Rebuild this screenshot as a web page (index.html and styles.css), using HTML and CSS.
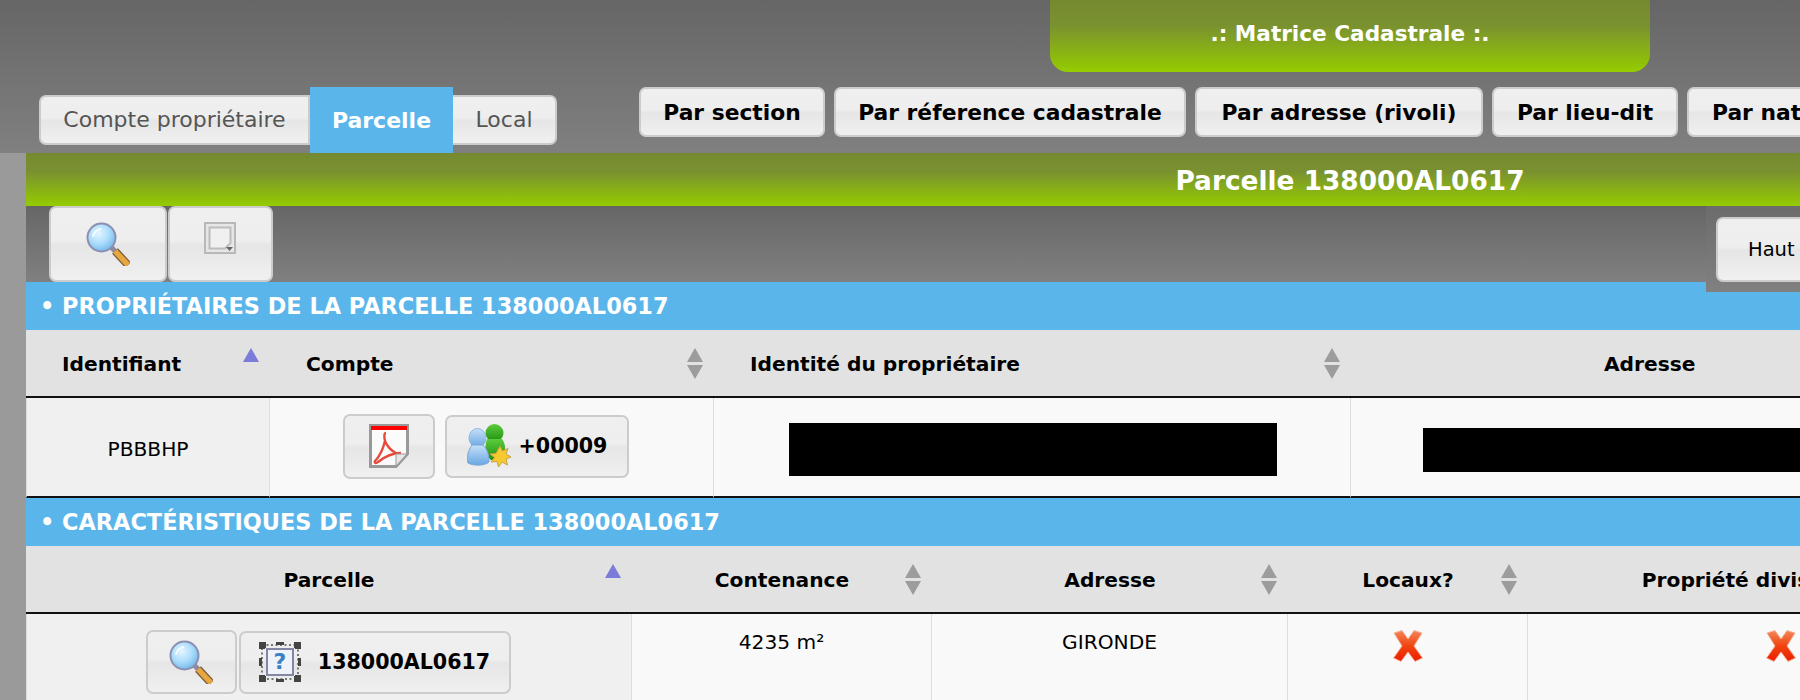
FILE: index.html
```html
<!DOCTYPE html>
<html lang="fr">
<head>
<meta charset="utf-8">
<title>Matrice Cadastrale</title>
<link rel="stylesheet" href="styles.css">
</head>
<body>
<svg class="defs" width="0" height="0" aria-hidden="true">
  <defs>
    <radialGradient id="lens" cx="0.4" cy="0.35" r="0.7">
      <stop offset="0" stop-color="#e4f6ff"/><stop offset="0.55" stop-color="#a9dcfb"/><stop offset="1" stop-color="#6fb4ea"/>
    </radialGradient>
    <linearGradient id="xred" x1="0" y1="0" x2="0" y2="1">
      <stop offset="0" stop-color="#f4875a"/><stop offset="0.5" stop-color="#f0440f"/><stop offset="1" stop-color="#ee1c00"/>
    </linearGradient>
    <linearGradient id="pblue" x1="0" y1="0" x2="0" y2="1">
      <stop offset="0" stop-color="#c4e0f9"/><stop offset="1" stop-color="#6aa6e2"/>
    </linearGradient>
    <linearGradient id="pgreen" x1="0" y1="0" x2="0" y2="1">
      <stop offset="0" stop-color="#5ccc3c"/><stop offset="1" stop-color="#1f8e12"/>
    </linearGradient>
    <symbol id="i-lens" viewBox="0 0 44 44">
      <path d="M25 25 L30 30" stroke="#8a8aa0" stroke-width="5"/>
      <path d="M29 29 L42 43" stroke="#7a5a3a" stroke-width="8"/>
      <path d="M29 29 L42 43" stroke="#e6a640" stroke-width="5.5"/>
      <circle cx="15.5" cy="15.5" r="14" fill="url(#lens)" stroke="#8c8fb0" stroke-width="2"/>
      <path d="M7 15 A9 9 0 0 1 15 7" fill="none" stroke="#f4fcff" stroke-width="2"/>
    </symbol>
    <symbol id="i-x" viewBox="0 0 32 32">
      <path d="M2 3 L10 0.5 L16 9 L22 0.5 L30 3 L22 16 L30.5 28 L23 31.5 L16 22 L9 31.5 L1.5 28 L10 16 Z" fill="url(#xred)" stroke="#f5b49a" stroke-width="1" stroke-linejoin="round"/>
    </symbol>
    <symbol id="s-up" viewBox="0 0 16 32"><path d="M8 1 L16 15 H0 Z" fill="#7b7bd8"/></symbol>
    <symbol id="s-both" viewBox="0 0 16 32"><path d="M8 1 L16 15 H0 Z M0 18 H16 L8 32 Z" fill="#9c9c9c"/></symbol>
  </defs>
</svg>
<div class="page">
  <header class="top">
    <div class="app-title">.: Matrice Cadastrale :.</div>
    <div class="top-row">
      <nav class="tabs">
        <a class="tab tab-first">Compte propriétaire</a>
        <a class="tab tab-active">Parcelle</a>
        <a class="tab tab-last">Local</a>
      </nav>
      <nav class="search-nav">
        <a class="btn nav-btn nav-short">Par section</a>
        <a class="btn nav-btn nav-ref">Par réference cadastrale</a>
        <a class="btn nav-btn nav-addr">Par adresse (rivoli)</a>
        <a class="btn nav-btn nav-short">Par lieu-dit</a>
        <a class="btn nav-btn">Par nature</a>
      </nav>
    </div>
  </header>
  <div class="main">
    <aside class="strip"></aside>
    <main class="content">
      <h1 class="page-title">Parcelle 138000AL0617</h1>
      <div class="toolbar">
        <a class="btn tool-btn tool-search"><svg class="ic44"><use href="#i-lens"/></svg></a>
        <a class="btn tool-btn tool-select">
          <svg class="ic32" viewBox="0 0 32 32">
            <rect x="1" y="1" width="30" height="30" fill="#e6e6e6" stroke="#b8b8b8" stroke-width="2"/>
            <path d="M5.5 5.5 H26.5 V21 L21 26.5 H5.5 Z" fill="#f0f0f0" stroke="#bcbcbc" stroke-width="2"/>
            <path d="M22 25 H29 L25.5 29 Z" fill="#666"/>
          </svg>
        </a>
        <div class="haut-box"><a class="btn haut-btn">Haut de page</a></div>
      </div>

      <h2 class="section-title">• PROPRIÉTAIRES DE LA PARCELLE 138000AL0617</h2>
      <table class="grid grid-owners">
        <colgroup><col class="o1"><col class="o2"><col class="o3"><col class="o4"></colgroup>
        <thead>
          <tr>
            <th class="left">Identifiant<svg class="sort"><use href="#s-up"/></svg></th>
            <th class="left">Compte<svg class="sort"><use href="#s-both"/></svg></th>
            <th class="left">Identité du propriétaire<svg class="sort"><use href="#s-both"/></svg></th>
            <th>Adresse</th>
          </tr>
        </thead>
        <tbody>
          <tr>
            <td class="sorted shift">PBBBHP</td>
            <td>
              <div class="cell-btns cell-btns-owner">
                <a class="btn row-btn pdf-btn">
                  <svg class="ic-pdf" viewBox="0 0 40 44">
                    <path d="M1.5 1.5 H38.5 V30 L27 42.5 H1.5 Z" fill="#fbfbfb" stroke="#999" stroke-width="3"/>
                    <rect x="2" y="2" width="36" height="4" fill="#f00"/>
                    <path d="M17 9 C15 9 15 13 16 17 C14 25 10 33 6 37 C5 39 7 40 9 38 C14 34 22 29 32 29 M16 17 C18 22 21 26 27 29" fill="none" stroke="#e64a3a" stroke-width="2.4"/>
                    <path d="M27 42 V30 H38 Z" fill="#e6e6e6" stroke="#999"/>
                  </svg>
                </a>
                <a class="btn row-btn count-btn">
                  <svg class="ic-users" viewBox="0 0 44 44">
                    <ellipse cx="27.5" cy="9" rx="9" ry="9" fill="url(#pgreen)"/>
                    <path d="M20 15 C17 24 18 31 24 36 H36 C39 28 39 20 35 15 Z" fill="url(#pgreen)"/>
                    <ellipse cx="10.5" cy="14" rx="8.5" ry="9.5" fill="url(#pblue)" stroke="#8fb6e0"/>
                    <path d="M5 21 C0 28 -1 37 1 39 C6 42 18 42 22 38 C22 30 20 25 16 21 Z" fill="url(#pblue)" stroke="#7ba7d8"/>
                    <path d="M33 22 L35.5 27 L41 24.5 L39 30 L44 33 L39 35 L40.5 41 L35 38 L31.5 43 L30 37.5 L24 38 L27.5 33.5 L23 30 L29 29.5 Z" fill="#f6c92e" stroke="#c9a24a"/>
                  </svg>
                  <span>+00009</span>
                </a>
              </div>
            </td>
            <td class="shift-more"><div class="redact redact-name"></div></td>
            <td class="shift-more"><div class="redact redact-addr"></div></td>
          </tr>
        </tbody>
      </table>

      <h2 class="section-title">• CARACTÉRISTIQUES DE LA PARCELLE 138000AL0617</h2>
      <table class="grid grid-carac">
        <colgroup><col class="c1"><col class="c2"><col class="c3"><col class="c4"><col class="c5"></colgroup>
        <thead>
          <tr>
            <th>Parcelle<svg class="sort"><use href="#s-up"/></svg></th>
            <th>Contenance<svg class="sort"><use href="#s-both"/></svg></th>
            <th>Adresse<svg class="sort"><use href="#s-both"/></svg></th>
            <th>Locaux?<svg class="sort"><use href="#s-both"/></svg></th>
            <th>Propriété divisée en lots</th>
          </tr>
        </thead>
        <tbody>
          <tr>
            <td class="sorted">
              <div class="cell-btns cell-btns-tight">
                <a class="btn row-btn lens-btn"><svg class="ic44"><use href="#i-lens"/></svg></a>
                <a class="btn row-btn parcel-btn">
                  <svg class="ic-parcel" viewBox="0 0 42 40">
                    <rect x="3" y="3" width="36" height="34" fill="none" stroke="#777" stroke-width="2" stroke-dasharray="2 2.5"/>
                    <path d="M0 0 H7 V6 H6 V7 H0 Z M35 0 H42 V7 H36 V6 H35 Z M0 33 H6 V34 H7 V40 H0 Z M42 33 V40 H35 V34 H36 V33 Z M17 0 H25 V3 H17 Z M17 37 H25 V40 H17 Z M0 16 H3 V24 H0 Z M39 16 H42 V24 H39 Z" fill="#444"/>
                    <rect x="8" y="7" width="26" height="26" fill="#eef3fa" stroke="#8585a5" stroke-width="2"/>
                    <text x="21" y="27" class="q-mark">?</text>
                  </svg>
                  <span>138000AL0617</span>
                </a>
              </div>
            </td>
            <td class="center pad-top">4235 m²</td>
            <td class="center pad-top">GIRONDE</td>
            <td class="center pad-icon"><svg class="ic32x"><use href="#i-x"/></svg></td>
            <td class="center pad-icon"><svg class="ic32x"><use href="#i-x"/></svg></td>
          </tr>
        </tbody>
      </table>
    </main>
  </div>
</div>
</body>
</html>
```
FILE: styles.css
```css
* { box-sizing: border-box; }
html, body { margin: 0; height: 700px; overflow: hidden; background: #808080; }
body { font-family: "DejaVu Sans", Verdana, sans-serif; color: #000; }
.defs { position: absolute; }
.page { width: 2700px; }
a { color: inherit; text-decoration: none; }

.top { height: 153px; background: linear-gradient(#666666, #808080); }
.app-title {
  width: 600px; height: 72px; margin: 0 auto;
  border-radius: 0 0 18px 18px;
  background: linear-gradient(#758a30 0, #7a9130 35%, #95cc00 100%);
  color: #fff; font-weight: bold; font-size: 21.6px; line-height: 67px; text-align: center;
}
.top-row { display: flex; align-items: flex-end; height: 66px; margin-top: 15px; padding-left: 39px; }
.tabs { display: flex; align-items: flex-end; width: 518px; flex: none; }
.tab {
  height: 50px; margin-bottom: 8px; border: 2px solid #cccccc; line-height: 46px;
  font-size: 22px; color: #555; text-align: center;
  background: linear-gradient(#efefef 0, #eeeeee 45%, #e6e6e6 52%, #f0f0f0 100%);
}
.tab-first { width: 271px; border-radius: 7px 0 0 7px; }
.tab-last { width: 104px; border-radius: 0 7px 7px 0; border-left: 0; }
.tab-active {
  width: 143px; height: 66px; margin: 0; border: 0; background: #5ab6ea;
  color: #fff; font-weight: bold; line-height: 68px;
}
.search-nav { display: flex; gap: 9px; margin: 0 0 16px 82px; }

.btn {
  display: block; border: 2px solid #cccccc; border-radius: 7px;
  background: linear-gradient(#efefef 0, #eeeeee 45%, #e6e6e6 52%, #f0f0f0 100%);
}
.nav-btn { height: 50px; padding: 0 23px; line-height: 48px; font-weight: bold; font-size: 21.8px; text-align: center; white-space: nowrap; }
.nav-short { width: 186px; padding: 0; }
.nav-ref { width: 352px; padding: 0; }
.nav-addr { width: 288px; padding: 0; }

.main { display: flex; height: 547px; }
.strip { width: 26px; flex: none; background: #9a9a9a; }
.content { width: 2648px; flex: none; }
.page-title {
  margin: 0; height: 53px; line-height: 55px; text-align: center;
  font-size: 26.4px; font-weight: bold; color: #fff;
  background: linear-gradient(#758a30 0, #7a9130 35%, #95cc00 100%);
}
.toolbar {
  display: flex; height: 76px; padding-left: 23px;
  background: linear-gradient(#666666, #808080);
}
.tool-btn { height: 76px; display: flex; justify-content: center; padding-top: 14px; }
.tool-search { width: 118px; }
.tool-select { width: 105px; margin-left: 1px; padding-right: 2px; }
.ic44 { width: 44px; height: 44px; display: block; }
.ic32 { width: 32px; height: 32px; display: block; }
.haut-box {
  position: relative; z-index: 1; height: 86px; margin-left: 1433px; padding: 11px 0 0 10px;
  background: linear-gradient(#6c6c6c, #808080);
}
.haut-btn { height: 65px; padding: 0 30px; line-height: 61px; font-size: 19.5px; white-space: nowrap; }

.section-title {
  margin: 0; height: 48px; line-height: 48px; padding-left: 14px;
  background: #5ab6ea; color: #fff; font-size: 22.4px; font-weight: bold; white-space: nowrap;
}

.grid { width: 2648px; table-layout: fixed; border-collapse: separate; border-spacing: 0; }
.grid-carac { width: 2009px; }
.o1 { width: 244px; } .o2 { width: 444px; } .o3 { width: 637px; } .o4 { width: 1323px; }
.c1 { width: 606px; } .c2 { width: 300px; } .c3 { width: 356px; } .c4 { width: 240px; } .c5 { width: 507px; }
.grid th {
  position: relative; height: 68px; padding: 2px 0 0; background: #e2e2e2;
  border-bottom: 2px solid #111; font-size: 20.2px; font-weight: bold; text-align: center;
}
.grid th.left { text-align: left; padding-left: 36px; }
.grid-owners th:last-child { text-align: left; padding-left: 253px; }
.grid td {
  background: #f9f9f9; border-right: 1px solid #dddddd; font-size: 20.2px; text-align: center; padding: 0;
}
.grid-owners td { height: 100px; border-bottom: 2px solid #111; }
.grid-carac td { height: 100px; vertical-align: top; }
.grid td.sorted { background: #f0f0f0; border-left: 1px solid #dddddd; }
.grid td.shift { padding-top: 4px; }
.grid td.shift-more { padding-top: 5px; }
.sort { position: absolute; right: 11px; top: 17px; width: 16px; height: 32px; }
.grid td.pad-top { padding-top: 16px; }
.grid td.pad-icon { padding-top: 16px; }
.ic32x { width: 32px; height: 32px; display: block; margin: 0 auto; }

.cell-btns { display: flex; justify-content: center; align-items: center; gap: 10px; }
.cell-btns-owner { padding: 0 11px 2px 0; }
.cell-btns-tight { gap: 2px; padding: 16px 2px 0 0; }
.row-btn { display: flex; align-items: center; justify-content: center; font-weight: bold; font-size: 20.6px; }
.pdf-btn { width: 92px; height: 65px; }
.count-btn { width: 184px; height: 63px; gap: 8px; }
.lens-btn { width: 91px; height: 64px; }
.parcel-btn { width: 272px; height: 63px; gap: 17px; }
.ic-pdf { width: 40px; height: 44px; }
.ic-users { width: 44px; height: 44px; }
.ic-parcel { width: 42px; height: 40px; }
.q-mark { font-size: 22px; font-weight: bold; fill: #3c7fc4; text-anchor: middle; }
.redact { background: #000; }
.redact-name { width: 488px; height: 53px; margin-left: 75px; }
.redact-addr { width: 600px; height: 44px; margin-left: 72px; }
```
